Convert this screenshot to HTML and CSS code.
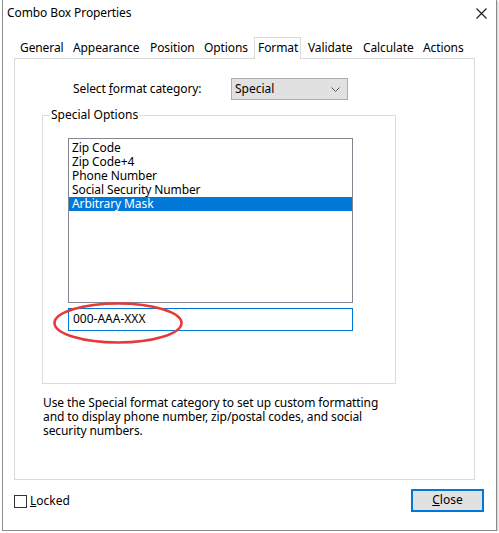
FILE: index.html
```html
<!DOCTYPE html>
<html>
<head>
<meta charset="utf-8">
<link rel="stylesheet" href="styles.css">
</head>
<body>
<div class="window">
  <div class="titlebar">
    <span class="title">Combo Box Properties</span>
    <svg class="close-x" width="11" height="11" viewBox="0 0 11 11"><path d="M0.5 0.5 L10.5 10.5 M10.5 0.5 L0.5 10.5" stroke="#1a1a1a" stroke-width="1.1" fill="none"/></svg>
  </div>
  <div class="tabs">
    <span class="tab t-general">General</span>
    <span class="tab t-appearance">Appearance</span>
    <span class="tab t-position">Position</span>
    <span class="tab t-options">Options</span>
    <span class="tab t-format selected">Format</span>
    <span class="tab t-validate">Validate</span>
    <span class="tab t-calculate">Calculate</span>
    <span class="tab t-actions">Actions</span>
  </div>
  <div class="panel">
    <div class="select-row">
      <span class="select-label">Select <u>f</u>ormat category:</span>
      <div class="dropdown">
        <span>Special</span>
        <svg width="9" height="5" viewBox="0 0 9 5"><path d="M0.5 0.5 L4.5 4.5 L8.5 0.5" stroke="#555" stroke-width="1" fill="none"/></svg>
      </div>
    </div>
    <div class="groupbox">
      <span class="group-label">Special Options</span>
      <div class="listbox">
        <div class="item">Zip Code</div>
        <div class="item">Zip Code+4</div>
        <div class="item">Phone Number</div>
        <div class="item">Social Security Number</div>
        <div class="item active">Arbitrary Mask</div>
      </div>
      <div class="textbox">000-AAA-XXX</div>
      <svg class="ellipse" width="134" height="46" viewBox="0 0 134 46"><ellipse cx="67" cy="23" rx="63.5" ry="19.5" stroke="#e5393b" stroke-width="2.6" fill="none"/></svg>
    </div>
    <p class="desc">Use the Special format category to set up custom formatting<br>and to display phone number, zip/postal codes, and social<br>security numbers.</p>
  </div>
  <div class="bottom-row">
    <label class="locked"><span class="checkbox"></span><span><u>L</u>ocked</span></label>
    <div class="button"><u>C</u>lose</div>
  </div>
</div>
</body>
</html>
```
FILE: styles.css
```css
* { box-sizing: border-box; }
html, body { margin: 0; padding: 0; background: #ffffff; }
body {
  font-family: "Noto Sans", "Open Sans", sans-serif;
  font-size: 12px;
  color: #000;
}
.window {
  position: relative;
  margin-left: 2px;
  width: 495px;
  height: 531px;
  border: 1px solid #8c8c8c;
  border-top: none;
  background: #fff;
  box-shadow: 1px 1px 0 #d6d6d6, 2px 2px 0 #ececec;
}
.titlebar {
  height: 26px;
  display: flex;
  align-items: center;
  justify-content: space-between;
  padding: 0 9px 0 4px;
}
.title { line-height: 16px; letter-spacing: -0.1px; }
.close-x { display: block; margin-top: 1px; }
.tabs {
  margin-top: 11px;
  margin-left: 11px;
  height: 21px;
  display: flex;
  align-items: flex-end;
}
.tab {
  height: 20px;
  line-height: 16px;
  padding-top: 2px;
  padding-left: 6px;
  white-space: nowrap;
  letter-spacing: -0.1px;
}
.t-general { width: 53px; }
.t-appearance { width: 77px; }
.t-position { width: 54px; }
.t-options { width: 56px; }
.t-format { width: 47px; }
.t-validate { width: 56px; padding-left: 7px; }
.t-calculate { width: 60px; padding-left: 6px; }
.t-actions { width: 50px; }
.tab.selected {
  position: relative;
  z-index: 1;
  height: 22px;
  margin-bottom: -1px;
  padding-left: 3px;
  padding-top: 2px;
  border: 1px solid #d9d9d9;
  border-bottom: none;
  background: #fff;
}
.panel {
  margin-left: 11px;
  width: 461px;
  height: 422px;
  border: 1px solid #d9d9d9;
  padding-top: 19px;
}
.select-row {
  display: flex;
  align-items: center;
  height: 22px;
  padding-left: 58px;
}
.select-label { width: 158px; line-height: 16px; letter-spacing: -0.1px; }
.dropdown {
  width: 117px;
  height: 22px;
  border: 1px solid #adadad;
  background: #e1e1e1;
  display: flex;
  align-items: center;
  justify-content: space-between;
  padding: 0 7px 0 3px;
  line-height: 16px;
}
.dropdown svg { display: block; }
.groupbox {
  position: relative;
  margin-top: 15px;
  margin-left: 27px;
  width: 354px;
  height: 269px;
  border: 1px solid #dcdcdc;
  padding-top: 22px;
  padding-left: 25px;
}
.group-label {
  position: absolute;
  top: -9px;
  left: 7px;
  padding: 0 1px;
  background: #fff;
  line-height: 16px;
}
.listbox {
  width: 285px;
  height: 165px;
  border: 1px solid #828790;
  padding-top: 2px;
}
.item {
  height: 14px;
  line-height: 14px;
  padding-left: 3px;
  white-space: nowrap;
  letter-spacing: -0.1px;
}
.item.active { background: #0078d7; color: #fff; }
.textbox {
  margin-top: 5px;
  width: 285px;
  height: 23px;
  border: 1px solid #0078d7;
  padding-left: 4px;
  line-height: 20px;
}
.ellipse {
  position: absolute;
  left: 8px;
  top: 184px;
}
.desc {
  margin: 12px 0 0 0;
  padding-left: 28px;
  line-height: 14px;
  letter-spacing: -0.1px;
}
.bottom-row {
  margin-top: 9px;
  height: 23px;
  display: flex;
  align-items: center;
  justify-content: space-between;
  padding: 0 12px 0 11px;
}
.locked { display: flex; align-items: center; gap: 3px; line-height: 16px; }
.checkbox {
  width: 13px;
  height: 13px;
  border: 1px solid #333;
  background: #fff;
  margin-top: 1px;
}
.button {
  width: 73px;
  height: 23px;
  border: 2px solid #0078d7;
  background: #e1e1e1;
  text-align: center;
  line-height: 18px;
}
```
